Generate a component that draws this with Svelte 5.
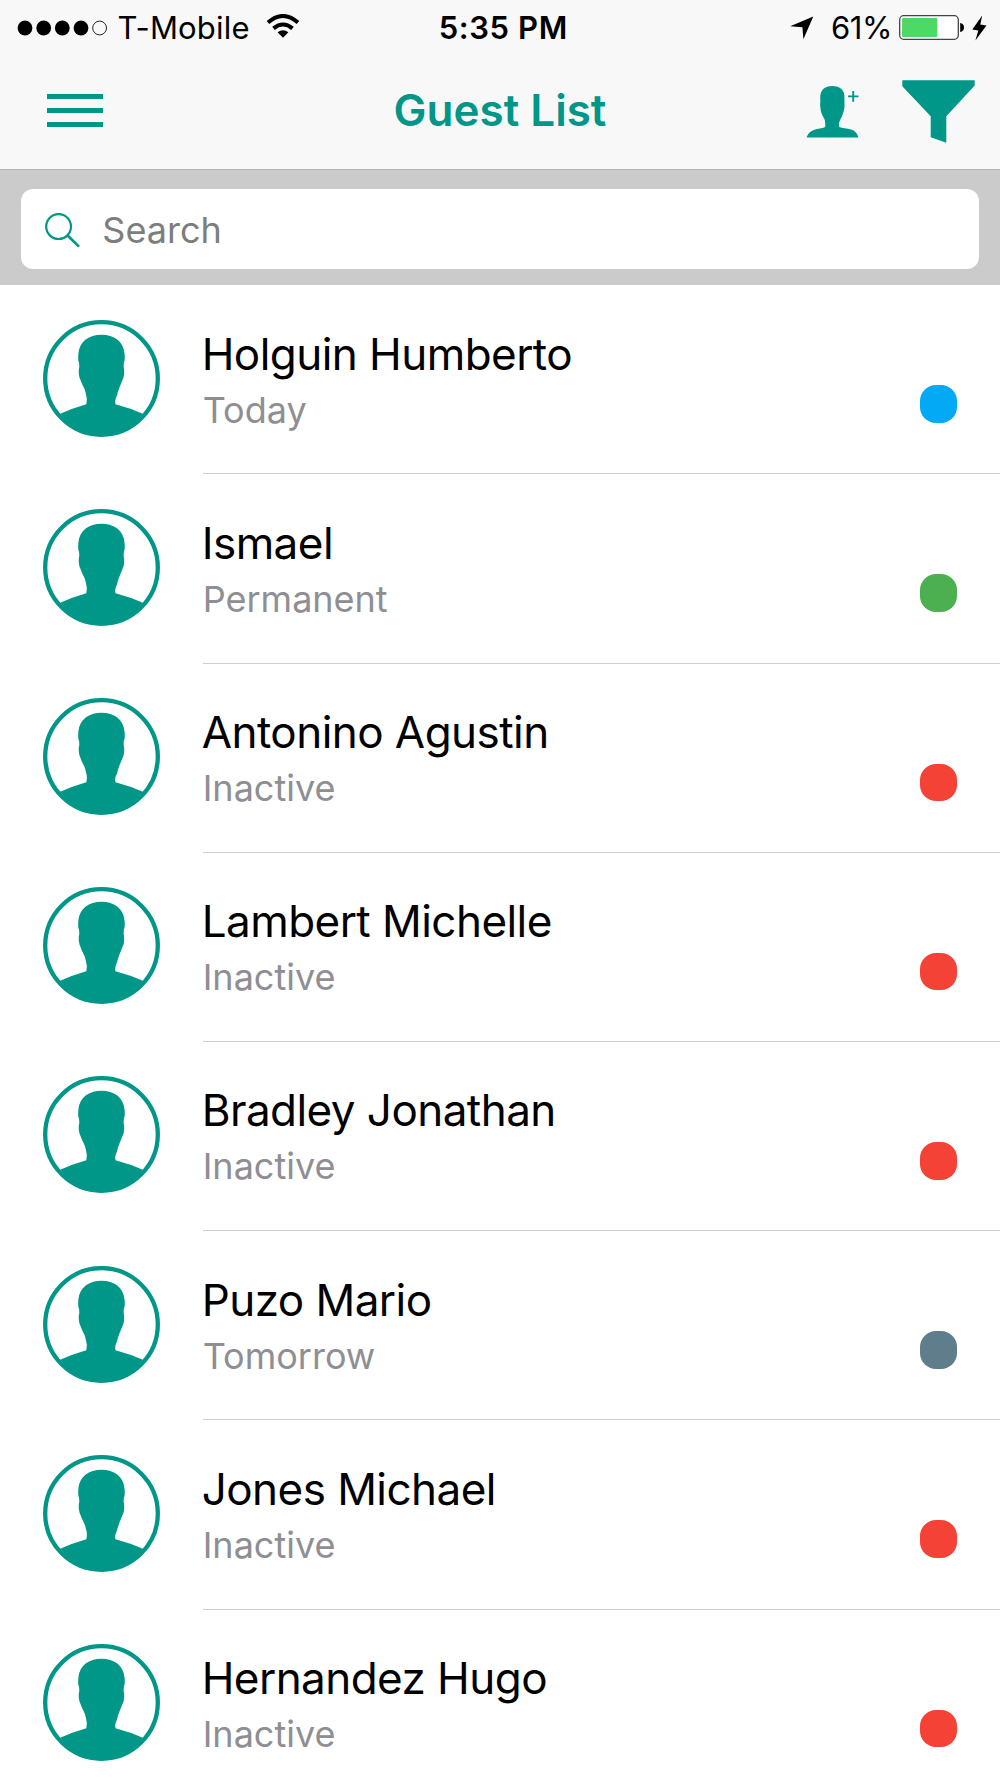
<script>
  const colors = {
    Today: '#03a9f4',
    Permanent: '#4caf50',
    Inactive: '#f44336',
    Tomorrow: '#607d8b'
  };

  const guests = [
    { name: 'Holguin Humberto', status: 'Today' },
    { name: 'Ismael', status: 'Permanent' },
    { name: 'Antonino Agustin', status: 'Inactive' },
    { name: 'Lambert Michelle', status: 'Inactive' },
    { name: 'Bradley Jonathan', status: 'Inactive' },
    { name: 'Puzo Mario', status: 'Tomorrow' },
    { name: 'Jones Michael', status: 'Inactive' },
    { name: 'Hernandez Hugo', status: 'Inactive' }
  ];
</script>

<div class="screen">
  <header>
    <div class="status">
      <div class="carrier">
        <svg class="signal" width="92" height="16" viewBox="0 0 92 16">
          <circle cx="8" cy="8" r="7.4" />
          <circle cx="26.7" cy="8" r="7.4" />
          <circle cx="45.3" cy="8" r="7.4" />
          <circle cx="64" cy="8" r="7.4" />
          <circle cx="82.6" cy="8" r="6.9" fill="none" stroke="#222" stroke-width="1" />
        </svg>
        <span class="operator">T-Mobile</span>
        <svg class="wifi" width="34" height="25" viewBox="0 0 34 25">
          <g fill="none" stroke="#000" stroke-width="4">
            <path d="M2 8.6Q17-4.6 32 8.6" />
            <path d="M7.5 14.4Q17 6.6 26.5 14.4" />
          </g>
          <path d="M11.6 18.3Q17 14.3 22.4 18.3L17 23.8Z" />
        </svg>
      </div>
      <span class="time">5:35 PM</span>
      <div class="power">
        <svg width="24" height="24" viewBox="0 0 24 24"><path d="M23.3.4 13.4 23.2 12.4 11.3.2 10.3Z" /></svg>
        <span class="percent">61%</span>
        <svg class="battery" width="66" height="25" viewBox="0 0 66 25">
          <rect x=".7" y=".7" width="58.6" height="23.6" rx="4" fill="#fff" stroke="#444" stroke-width="1.3" />
          <rect x="3" y="3" width="35.3" height="19" rx="1" fill="#4cd964" />
          <path d="M61.2 8Q65 8.6 65 12.5T61.2 17Z" />
        </svg>
        <svg class="bolt" width="15" height="26" viewBox="0 0 15 26"><path d="M10.2.4.3 14.6l6 1L3.4 25.4 14.5 10.4l-6.2-.8Z" /></svg>
      </div>
    </div>
    <nav>
      <button class="menu" aria-label="Menu"><span></span><span></span><span></span></button>
      <h1>Guest List</h1>
      <div class="actions">
        <button aria-label="Add guest">
          <svg width="53" height="53" viewBox="0 0 53 53">
            <path d="M26.2 1C34 1 39 5.2 38.4 13V17.3C38.7 18.5 38.4 20.5 38.4 22.5 38 26 36.6 30.5 34.4 34.4 32.8 37 32.7 40 33.2 42 36 43.5 41 43.2 45 44.6 49.5 46 51.6 49 52.4 52.5H.6C1.4 49 4 46.3 7.7 44.9 12 43.2 16 43.8 19.2 42.1 19.4 39 19.3 36.2 18.3 33.8 16 30 14.6 26.5 14.4 22.5 14 20.5 14 18.5 14.4 17.3L14.2 13C14.1 5.2 18.6 1 26.2 1Z" />
            <path d="M42 11.4H52.5M47.2 6V16.8" stroke="#009688" stroke-width="1.9" />
          </svg>
        </button>
        <button aria-label="Filter">
          <svg width="73" height="63" viewBox="0 0 73 63"><path d="M.3.3H72.7V5.5L44.3 36.2V62.7L28.7 57.3V36.2L.3 6.3Z" /></svg>
        </button>
      </div>
    </nav>
  </header>

  <div class="search">
    <label>
      <svg width="36" height="36" viewBox="0 0 36 36" fill="none" stroke="#009688" stroke-width="2.2">
        <circle cx="13.6" cy="13.6" r="12.4" /><path d="M22.3 22.3 34 33.6" stroke-width="2.7" />
      </svg>
      <input type="text" placeholder="Search" />
    </label>
  </div>

  <ul>
    {#each guests as guest}
      <li>
        <svg class="avatar" viewBox="0 0 117 117">
          <circle cx="58.5" cy="58.5" r="56.3" fill="#fff" stroke="#009688" stroke-width="4.3" />
          <path d="M17.2 93.7Q30 88 43.3 84.2Q44.7 79 42.8 73.5C42.2 68.5 39.2 65.5 37.7 60.5 35.8 57 35.1 51.5 36.3 46.5L36 42.5C34.9 41 35.2 36 35.4 33.5 36.5 21.5 46 14.8 58.5 14.8S80.6 21.5 81.5 33.5C81.9 36 82 41 80.9 42.5L80.6 46.5C81.8 51.5 81.3 57 79.3 60.5 77.8 64.5 74.8 71 74.2 75 72.3 79 71.8 81 72.5 84.2Q87 88 99.8 93.7C88 109 75 115 58.5 115S29 109 17.2 93.7Z" />
        </svg>
        <div class="details">
          <div class="info">
            <span class="name">{guest.name}</span>
            <span class="when">{guest.status}</span>
          </div>
          <span class="dot" style:background={colors[guest.status]}></span>
        </div>
      </li>
    {/each}
  </ul>
</div>

<style>
  :global(body) { margin: 0; background: #fff; }
  * { box-sizing: border-box; }
  .screen {
    width: 1000px;
    height: 1778px;
    overflow: hidden;
    background: #fff;
    font-family: Inter, 'Liberation Sans', sans-serif;
    color: #000;
  }
  svg { display: block; flex: none; }
  header {
    height: 170px;
    background: #f8f8f8;
    border-bottom: 1px solid #b2b2b2;
  }
  .status {
    display: grid;
    grid-template-columns: 1fr auto 1fr;
    align-items: center;
    height: 55px;
    padding: 0 13px 0 16.5px;
    font-size: 31px;
    line-height: 38px;
    white-space: nowrap;
  }
  .carrier, .power { display: flex; align-items: center; }
  .operator { margin-left: 9px; width: 133px; letter-spacing: 0.2px; }
  .wifi { margin-left: 15px; margin-top: -2px; }
  .time { font-weight: 600; padding-left: 3px; letter-spacing: 0.6px; }
  .power { justify-content: flex-end; }
  .percent { width: 59px; margin-left: 17px; letter-spacing: -0.4px; }
  .battery { margin-left: 9px; }
  .bolt { margin-left: 7px; }
  nav {
    display: grid;
    grid-template-columns: 1fr auto 1fr;
    height: 114px;
    padding: 0 25px;
  }
  button {
    display: block;
    padding: 0;
    border: 0;
    background: none;
    fill: #009688;
  }
  .menu {
    display: flex;
    flex-direction: column;
    gap: 9px;
    width: 56px;
    margin: 39px 0 0 22px;
    align-self: start;
  }
  .menu span { height: 5px; width: 56px; background: #009688; }
  h1 {
    margin: 28px 0 0;
    color: #009688;
    font-size: 44px;
    font-weight: 600;
    line-height: 54px;
    white-space: nowrap;
  }
  .actions {
    display: flex;
    justify-content: flex-end;
    align-items: flex-start;
    gap: 43px;
    padding-top: 25px;
  }
  .actions button:first-child { margin-top: 5px; }
  .search {
    height: 115.3px;
    padding: 19px 21.3px 16px;
    background: #cbcbcb;
  }
  label {
    display: flex;
    align-items: center;
    gap: 21px;
    height: 80.3px;
    padding: 0 24px;
    border-radius: 12px;
    background: #fff;
  }
  label svg { margin-top: 3px; }
  input {
    flex: 1;
    min-width: 0;
    padding: 2px 0 0;
    border: 0;
    outline: 0;
    background: none;
    font: 36px Inter, 'Liberation Sans', sans-serif;
  }
  input::placeholder { color: #7d7d7d; opacity: 1; }
  ul { margin: 0; padding: 0; list-style: none; }
  li {
    display: flex;
    height: 189.2px;
    padding-left: 42.5px;
  }
  .avatar {
    width: 117px;
    height: 117px;
    margin-top: 34.3px;
    fill: #009688;
  }
  .details {
    display: flex;
    flex: 1;
    justify-content: space-between;
    margin-left: 43.2px;
    padding-right: 42.7px;
    border-bottom: 1.5px solid #cfced2;
  }
  .info { display: flex; flex-direction: column; padding-top: 41.3px; white-space: nowrap; }
  .name { margin-left: -1px; font-size: 44px; line-height: 54px; letter-spacing: -0.55px; }
  .when { color: #8e8e93; font-size: 36px; line-height: 44px; margin-top: 7px; }
  .dot { width: 37.5px; height: 37.5px; margin-top: 100px; border-radius: 16px; }
</style>
